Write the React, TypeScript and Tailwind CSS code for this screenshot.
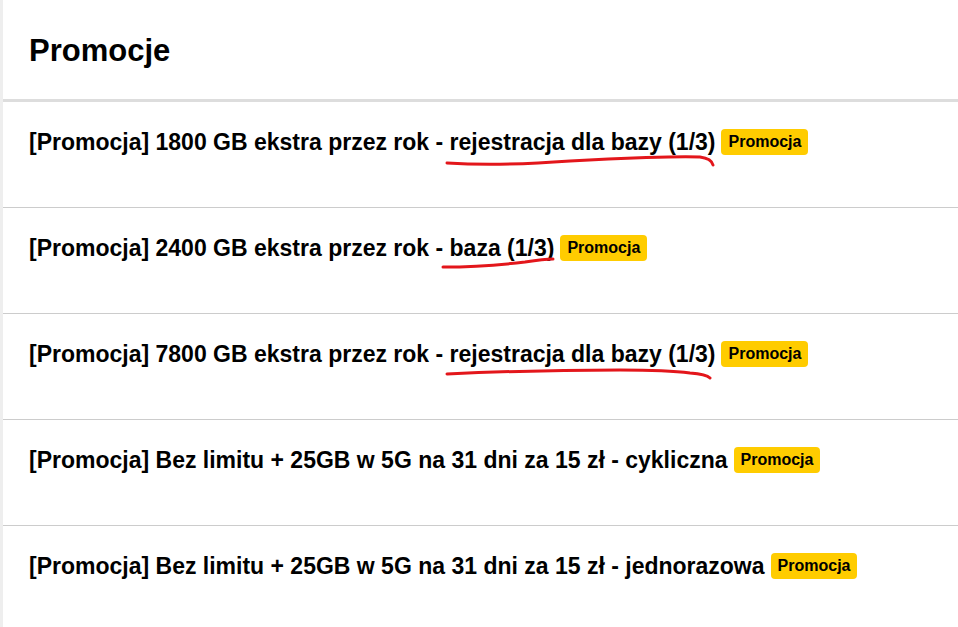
// scribble coordinates: origin = left edge of the marked text, y = from top of the 30px line box
const rows = [
  {
    lead: '[Promocja] 1800 GB ekstra przez rok - ',
    mark: 'rejestracja dla bazy (1/3)',
    scribble: 'M-3 36 C 30 38, 80 37, 120 34 C 170 31, 230 29, 250 30 C 258 31, 262 34, 263 38',
  },
  {
    lead: '[Promocja] 2400 GB ekstra przez rok - ',
    mark: 'baza (1/3)',
    scribble: 'M-7 34 C 20 34, 50 32, 75 29 C 88 27, 97 26, 103 26',
  },
  {
    lead: '[Promocja] 7800 GB ekstra przez rok - ',
    mark: 'rejestracja dla bazy (1/3)',
    scribble: 'M-3 35 C 40 33, 110 31, 170 31 C 200 31, 225 32, 240 34 C 252 35, 258 37, 260 39',
  },
  { lead: '[Promocja] Bez limitu + 25GB w 5G na 31 dni za 15 zł - cykliczna' },
  { lead: '[Promocja] Bez limitu + 25GB w 5G na 31 dni za 15 zł - jednorazowa' },
];

function Badge() {
  return (
    <span className="ml-[6px] inline-flex h-[26px] items-center rounded-[4px] bg-[#ffcc00] px-[7px] text-[16px] font-bold text-black">
      Promocja
    </span>
  );
}

export default function App() {
  return (
    <div className="min-h-[627px] w-full border-l-[3px] border-[#eeeeee] bg-white text-black" style={{ fontFamily: '"Liberation Sans", Arial, sans-serif' }}>
      {/* Header */}
      <div className="flex h-[102px] items-center border-b-[3px] border-[#dddddd] pl-[26px] pt-[1px]">
        <h1 className="text-[31px] font-bold leading-none">Promocje</h1>
      </div>

      {rows.map((row, i) => (
        <div key={i} className="flex h-[106px] items-start border-b border-[#cccccc] pl-[26px] pt-[25px]">
          <div className="flex items-center">
            <span className="text-[23px] font-bold leading-[30px] whitespace-pre">
              {row.lead}
              {row.mark && (
                <span className="relative inline-block">
                  {row.mark}
                  <svg className="pointer-events-none absolute left-0 top-0 overflow-visible" width="270" height="45" fill="none">
                    <path d={row.scribble} stroke="#e3161b" strokeWidth="3" strokeLinecap="round" />
                  </svg>
                </span>
              )}
            </span>
            <Badge />
          </div>
        </div>
      ))}
    </div>
  );
}
